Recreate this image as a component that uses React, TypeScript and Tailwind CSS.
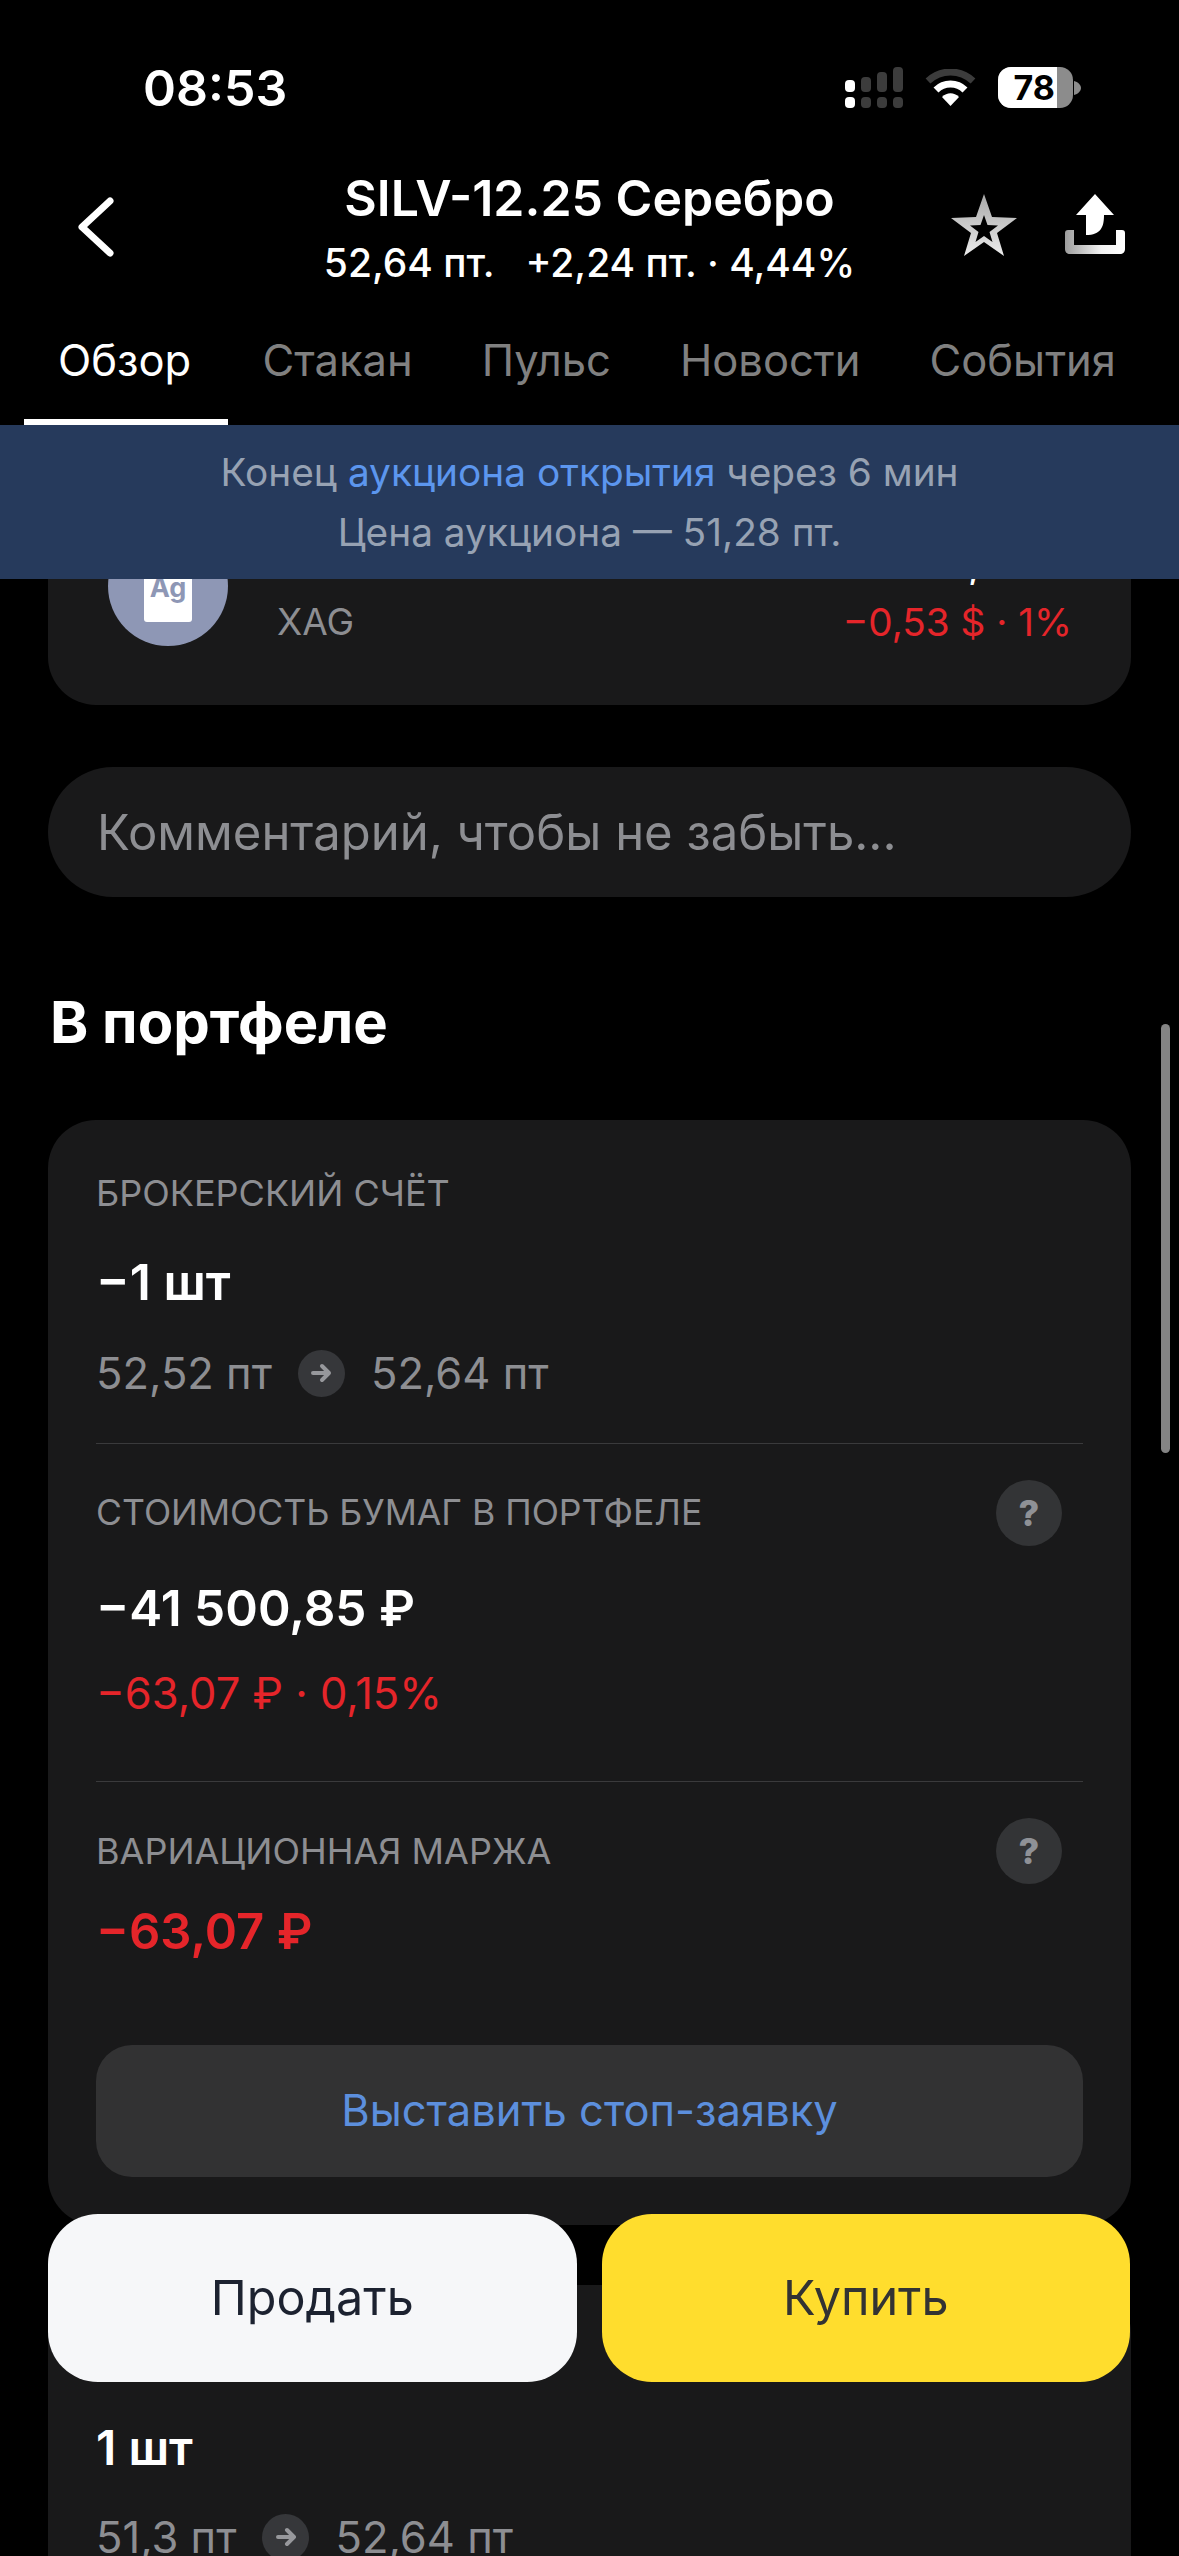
const FONT = "font-['Inter','Noto_Sans',sans-serif]";

function SignalIcon() {
  return (
    <svg width="58" height="41" viewBox="0 0 58 41">
      <rect x="0" y="13" width="10" height="12" rx="4" fill="#fff" />
      <rect x="16" y="10" width="10" height="15" rx="4" fill="#3c3c3c" />
      <rect x="32" y="5" width="10" height="20" rx="4" fill="#3c3c3c" />
      <rect x="48" y="0" width="10" height="25" rx="4" fill="#3c3c3c" />
      <rect x="0" y="30" width="10" height="11" rx="4" fill="#fff" />
      <rect x="16" y="30" width="10" height="11" rx="4" fill="#3c3c3c" />
      <rect x="32" y="30" width="10" height="11" rx="4" fill="#3c3c3c" />
      <rect x="48" y="30" width="10" height="11" rx="4" fill="#3c3c3c" />
    </svg>
  );
}

function WifiIcon() {
  return (
    <svg width="51" height="37" viewBox="0 0 51 37">
      <path d="M3 12 C16 0 35 0 48 12" fill="none" stroke="#3c3c3c" strokeWidth="7" strokeLinecap="butt" />
      <path d="M11 21 C19 13 32 13 40 21" fill="none" stroke="#fff" strokeWidth="7" strokeLinecap="butt" />
      <path d="M17 28 C22 23 29 23 34 28 L25.500 37 Z" fill="#fff" />
    </svg>
  );
}

function BatteryIcon() {
  return (
    <div className="flex items-center">
      <div className="relative flex h-[41px] w-[75px] items-center overflow-hidden rounded-[13px] bg-[#8c8c8c]">
        <div className="flex h-full w-[59px] items-center justify-end bg-white pr-[2px] text-[34px] leading-none font-bold text-black">78</div>
      </div>
      <svg width="7" height="14" viewBox="0 0 7 14" className="ml-[1px]">
        <path d="M0 0 C4 1 7 4 7 7 C7 10 4 13 0 14 Z" fill="#8c8c8c" />
      </svg>
    </div>
  );
}

function StarIcon() {
  return (
    <svg width="66" height="62" viewBox="0 0 66 62">
      <defs>
        <linearGradient id="starFill" x1="0" y1="0" x2="0" y2="1">
          <stop offset="0" stopColor="#a8a8a8" />
          <stop offset="1" stopColor="#ececec" />
        </linearGradient>
      </defs>
      <path
        fillRule="evenodd"
        fill="url(#starFill)"
        d="M33 0 L41 23 L66 24 L46 39 L53 62 L33 48 L13 62 L20 39 L0 24 L25 23 Z M33 21 L29.500 31 L19 31.500 L27.500 38 L24.500 48 L33 42 L41.500 48 L38.500 38 L47 31.500 L36.500 31 Z"
      />
    </svg>
  );
}

function ShareIcon() {
  return (
    <svg width="60" height="60" viewBox="0 0 60 60">
      <defs>
        <linearGradient id="trayFill" x1="0" y1="0" x2="1" y2="0">
          <stop offset="0" stopColor="#9c9c9c" />
          <stop offset="0.6" stopColor="#f2f2f2" />
          <stop offset="1" stopColor="#ffffff" />
        </linearGradient>
      </defs>
      <path d="M30 0 L49 21 L39 21 C39 33 36 41 21 41 L21 21 L11 21 Z" fill="#fff" />
      <path d="M3 36 L9 36 L9 51 L51 51 L51 36 L57 36 C59 36 60 37 60 39 L60 55 C60 58 58 60 55 60 L5 60 C2 60 0 58 0 55 L0 39 C0 37 1 36 3 36 Z" fill="url(#trayFill)" />
    </svg>
  );
}

function HelpBadge() {
  return (
    <div className="flex h-[66px] w-[66px] items-center justify-center rounded-full bg-[#333436] text-[36px] font-extrabold text-[#8f9196]">?</div>
  );
}

function PriceMove({ from, to }: { from: string; to: string }) {
  return (
    <div className="flex h-[48px] items-center text-[43.5px] leading-[48px] text-[#8d8e92]">
      <span>{from}</span>
      <span className="mx-[26px] flex h-[47px] w-[47px] items-center justify-center rounded-full bg-[#36373a]">
        <svg width="24" height="24" viewBox="0 0 24 24" fill="none" stroke="#97989c" strokeWidth="4" strokeLinecap="round" strokeLinejoin="round">
          <path d="M4 12 H20 M13 5 L20 12 L13 19" />
        </svg>
      </span>
      <span>{to}</span>
    </div>
  );
}

const TABS = ["Обзор", "Стакан", "Пульс", "Новости", "События"];

export default function App() {
  return (
    <div className={`relative h-[2556px] w-[1179px] overflow-hidden bg-black text-white ${FONT}`}>
      <div className="relative z-10 bg-black">
        <div className="flex h-[116px] items-end justify-between pr-[98px] pl-[143px]">
          <span className="text-[50px] leading-[56px] font-semibold">08:53</span>
          <div className="flex items-center gap-[22px] pb-[8px]">
            <SignalIcon />
            <WifiIcon />
            <BatteryIcon />
          </div>
        </div>
        <div className="mt-[54px] grid h-[128px] grid-cols-[1fr_auto_1fr] items-start">
          <div className="pt-[27px] pl-[78px]">
            <svg width="36" height="60" viewBox="0 0 36 60" fill="none" stroke="#fff" strokeWidth="7" strokeLinecap="round" strokeLinejoin="round">
              <path d="M32 4 L4 30 L32 56" />
            </svg>
          </div>
          <div className="text-center">
            <div className="text-[50px] leading-[56px] font-semibold">SILV-12.25 Серебро</div>
            <div className="mt-[14px] text-[39px] leading-[46px] font-medium whitespace-pre">52,64 пт.   +2,24 пт. · 4,44%</div>
          </div>
          <div className="flex items-start justify-end gap-[48px] pt-[24px] pr-[54px]">
            <StarIcon />
            <ShareIcon />
          </div>
        </div>
        <div className="mt-[32px] flex pl-[24px]">
          {TABS.map((tab, i) => (
            <div
              key={tab}
              className={
                i === 0
                  ? "h-[95px] w-[204px] border-b-[6px] border-white pl-[34px] text-[43.5px] leading-[60px] text-white"
                  : "h-[95px] px-[34.5px] text-[43.5px] leading-[60px] text-[#808080]"
              }
            >
              {tab}
            </div>
          ))}
        </div>
        <div className="flex h-[154px] flex-col items-center justify-center bg-[#263a5c] text-[38.8px] leading-[60px] text-[#97a2b3]">
          <div>
            Конец <span className="text-[#5c96ee]">аукциона открытия</span> через 6 мин
          </div>
          <div>Цена аукциона — 51,28 пт.</div>
        </div>
      </div>

      <div className="mx-[48px] mt-[-100px] flex h-[226px] items-start justify-between rounded-[48px] bg-[#19191a] pt-[47px] pr-[59px] pl-[60px]">
        <div className="flex items-start">
          <div className="flex h-[120px] w-[120px] items-center justify-center rounded-full bg-[#8e97b5]">
            <div className="mt-[6px] flex h-[66px] w-[48px] items-center justify-center rounded-[3px] bg-white pb-[2px] text-[27px] font-bold text-[#8e97b5]">Ag</div>
          </div>
          <div className="ml-[49px]">
            <div className="h-[71px] text-[44px] leading-[56px]">Серебро</div>
            <div className="text-[37px] leading-[50px] text-[#8d8e92]">XAG</div>
          </div>
        </div>
        <div className="text-right">
          <div className="h-[71px] pt-[10px] text-[44px] leading-[50px]">
            52,37 <span className="inline-block -translate-y-[8px]">$</span>
          </div>
          <div className="text-[38.7px] leading-[50px] text-[#e5252a]">−0,53 $ · 1%</div>
        </div>
      </div>

      <div className="mx-[48px] mt-[62px] flex h-[130px] items-center rounded-full bg-[#19191a] pt-[2px] pl-[49px] text-[49px] text-[#8d8e92]">
        Комментарий, чтобы не забыть...
      </div>

      <div className="mt-[89px] h-[134px] pl-[50px] text-[58px] leading-[72px] font-bold">В портфеле</div>

      <div className="mx-[48px] rounded-[48px] bg-[#19191a] px-[48px] pt-[53px] pb-[48px]">
        <div className="text-[36px] leading-[40px] text-[#8d8e92]">БРОКЕРСКИЙ СЧЁТ</div>
        <div className="mt-[41px] text-[50px] leading-[56px] font-semibold">−1 шт</div>
        <div className="mt-[39px]">
          <PriceMove from="52,52 пт" to="52,64 пт" />
        </div>
        <div className="mt-[46px] h-[1px] bg-[#3a3a3c]" />
        <div className="mt-[36px] flex h-[66px] items-center justify-between pr-[21px]">
          <span className="text-[35.6px] text-[#8d8e92]">СТОИМОСТЬ БУМАГ В ПОРТФЕЛЕ</span>
          <HelpBadge />
        </div>
        <div className="mt-[34px] text-[49.500px] leading-[56px] font-semibold">−41 500,85 ₽</div>
        <div className="mt-[33px] text-[43.5px] leading-[48px] text-[#e5252a]">−63,07 ₽ · 0,15%</div>
        <div className="mt-[64px] h-[1px] bg-[#3a3a3c]" />
        <div className="mt-[36px] flex h-[66px] items-center justify-between pr-[21px]">
          <span className="text-[36px] text-[#8d8e92]">ВАРИАЦИОННАЯ МАРЖА</span>
          <HelpBadge />
        </div>
        <div className="mt-[18px] text-[49px] leading-[60px] font-semibold text-[#e5252a]">−63,07 ₽</div>
        <div className="mt-[83px] flex h-[132px] items-center justify-center rounded-[36px] bg-[#323233] text-[43.5px] text-[#5c8fdd]">
          Выставить стоп-заявку
        </div>
      </div>

      <div className="mx-[48px] mt-[60px] h-[400px] rounded-t-[48px] bg-[#19191a] px-[48px] pt-[135px]">
        <div className="text-[48px] leading-[56px] font-semibold">1 шт</div>
        <div className="mt-[37px]">
          <PriceMove from="51,3 пт" to="52,64 пт" />
        </div>
      </div>

      <div className="absolute top-[2214px] right-[49px] left-[48px] z-20 flex gap-[25px]">
        <div className="flex h-[168px] flex-1 items-center justify-center rounded-[50px] bg-[#f6f7f9] text-[48.5px] text-[#1c2230]">Продать</div>
        <div className="flex h-[168px] flex-1 items-center justify-center rounded-[50px] bg-[#ffdd2d] text-[48.5px] text-[#333]">Купить</div>
      </div>

      <div className="absolute top-[1024px] left-[1161px] h-[429px] w-[9px] rounded-full bg-[#848484]" />
    </div>
  );
}
